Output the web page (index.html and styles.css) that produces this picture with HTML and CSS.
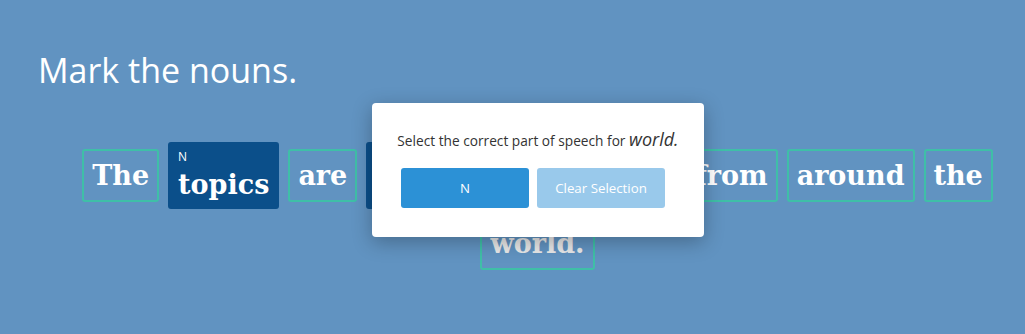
FILE: index.html
```html
<!DOCTYPE html>
<html lang="en">
<head>
<meta charset="utf-8">
<title>Mark the nouns</title>
<link rel="stylesheet" href="styles.css">
</head>
<body>
<main class="page">
  <h1 class="title">Mark the nouns.</h1>
  <div class="sentence">
    <span class="word">The</span>
    <span class="word word--marked"><span class="tag">N</span><span class="text">topics</span></span>
    <span class="word">are</span>
    <span class="word word--marked"><span class="tag">N</span><span class="text">features</span></span>
    <span class="word">gathered</span>
    <span class="word">from</span>
    <span class="word">around</span>
    <span class="word">the</span>
    <span class="word word--active">world.</span>
  </div>
  <div class="modal">
    <p class="modal__prompt">Select the correct part of speech for <em class="modal__word">world.</em></p>
    <div class="modal__actions">
      <button class="btn btn--primary">N</button>
      <button class="btn btn--muted">Clear Selection</button>
    </div>
  </div>
</main>
</body>
</html>
```
FILE: styles.css
```css
html, body {
  margin: 0;
  padding: 0;
  background: #6193c1;
}
.page {
  position: relative;
  width: 1025px;
  height: 334px;
  font-family: "Open Sans", "Noto Sans", sans-serif;
}
.title {
  margin: 0;
  padding: 47px 0 0 38px;
  font-weight: 400;
  font-size: 34px;
  line-height: 46px;
  color: #fff;
}
.sentence {
  margin: 49px 0 0 50px;
  display: flex;
  flex-wrap: wrap;
  justify-content: center;
  align-items: center;
  column-gap: 9px;
  row-gap: 8px;
}
.word {
  display: flex;
  flex-direction: column;
  box-sizing: border-box;
  height: 53px;
  padding: 0 8px;
  border: 2px solid #3fbfa7;
  border-radius: 3px;
  font-family: "DejaVu Serif", Georgia, serif;
  font-weight: 700;
  font-size: 27px;
  line-height: 49px;
  color: #fff;
}
.word--marked {
  height: 67px;
  border-color: #0b4f8a;
  background: #0b4f8a;
  line-height: 40px;
}
.word--active {
  color: #e8e8e8;
}
.tag {
  font-family: "Open Sans", sans-serif;
  font-weight: 400;
  font-size: 12px;
  line-height: 16px;
  padding-top: 5px;
}
.modal {
  position: absolute;
  left: 372px;
  top: 103px;
  width: 332px;
  height: 134px;
  box-sizing: border-box;
  background: #fff;
  border-radius: 4px;
  box-shadow: 0 5px 20px rgba(0, 0, 0, 0.28);
  padding-top: 25px;
  text-align: center;
}
.modal__prompt {
  margin: 0;
  font-size: 13.7px;
  line-height: 22px;
  color: #333;
}
.modal__word {
  font-size: 18px;
}
.modal__actions {
  margin-top: 16px;
  display: flex;
  justify-content: center;
  gap: 8px;
  padding-right: 10px;
}
.btn {
  width: 128px;
  height: 40px;
  border: 0;
  border-radius: 3px;
  font-family: "Open Sans", sans-serif;
  font-size: 13.3px;
  color: #fff;
}
.btn--primary {
  background: #2c91d6;
}
.btn--muted {
  background: #99c9eb;
}
```
